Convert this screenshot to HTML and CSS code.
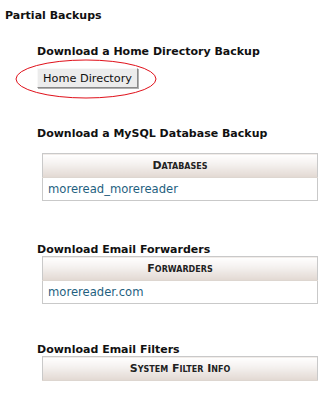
FILE: index.html
```html
<!DOCTYPE html>
<html>
<head>
<meta charset="utf-8">
<link rel="stylesheet" href="styles.css">
</head>
<body>
<div class="page">
  <h2 class="title">Partial Backups</h2>

  <section class="block block-home">
    <h3 class="block-title">Download a Home Directory Backup</h3>
    <div class="btn-wrap">
      <button class="btn">Home Directory</button>
      <svg class="ring" width="142" height="40" viewBox="0 0 142 40"><ellipse cx="71" cy="20" rx="70" ry="19" fill="none" stroke="#e0101a" stroke-width="1"/></svg>
    </div>
  </section>

  <section class="block block-db">
    <h3 class="block-title">Download a MySQL Database Backup</h3>
    <table class="list">
      <thead><tr><th>Databases</th></tr></thead>
      <tbody><tr><td><a href="#">moreread_morereader</a></td></tr></tbody>
    </table>
  </section>

  <section class="block block-fwd">
    <h3 class="block-title tight">Download Email Forwarders</h3>
    <table class="list">
      <thead><tr><th>Forwarders</th></tr></thead>
      <tbody><tr><td><a href="#">morereader.com</a></td></tr></tbody>
    </table>
  </section>

  <section class="block block-filter">
    <h3 class="block-title tight">Download Email Filters</h3>
    <table class="list">
      <thead><tr><th>System Filter Info</th></tr></thead>
    </table>
  </section>
</div>
</body>
</html>
```

FILE: styles.css
```css
html, body {
  margin: 0;
  padding: 0;
  background: #ffffff;
}
body {
  font-family: "DejaVu Sans", Verdana, sans-serif;
  color: #000;
}
.page {
  padding: 9px 0 0 5px;
}
.title {
  margin: 0;
  font-size: 11px;
  line-height: 14px;
  font-weight: bold;
  color: #111;
}
.block {
  padding-left: 32px;
}
.block-title {
  margin: 0;
  font-size: 11px;
  line-height: 14px;
  font-weight: bold;
  color: #111;
}
.block-title.tight {
  line-height: 12px;
}
.block-home {
  margin-top: 22px;
}
.btn-wrap {
  position: relative;
  margin-top: 9px;
  height: 20px;
}
.btn {
  display: block;
  height: 20px;
  padding: 0 5px;
  font-family: "DejaVu Sans", Verdana, sans-serif;
  font-size: 11.3px;
  color: #111;
  background: #ececec;
  border: 1px solid #f8f8f8;
  border-right-color: #8a8a8a;
  border-bottom-color: #8a8a8a;
  box-shadow: 1px 1px 0 #b0b0b0;
}
.ring {
  position: absolute;
  left: -22px;
  top: -9px;
}
.block-db {
  margin-top: 39px;
}
.block-db .list {
  margin-top: 12px;
}
.block-fwd {
  margin-top: 43px;
}
.block-filter {
  margin-top: 40px;
}
.list {
  margin-left: 5px;
  width: 276px;
  border-collapse: collapse;
  border: 1px solid #c9c9c9;
}
.list th {
  height: 23px;
  padding: 0;
  font-size: 11px;
  font-weight: bold;
  font-variant: small-caps;
  text-align: center;
  color: #222;
  background: linear-gradient(to bottom, #ffffff 0%, #f5f2f0 40%, #e2d8d2 100%);
  border-bottom: 1px solid #ddd6d0;
}
.list td {
  height: 22px;
  padding: 0 0 0 5px;
  font-size: 11.6px;
  background: #fff;
}
.list a {
  color: #1f5f7f;
  text-decoration: none;
}
```
